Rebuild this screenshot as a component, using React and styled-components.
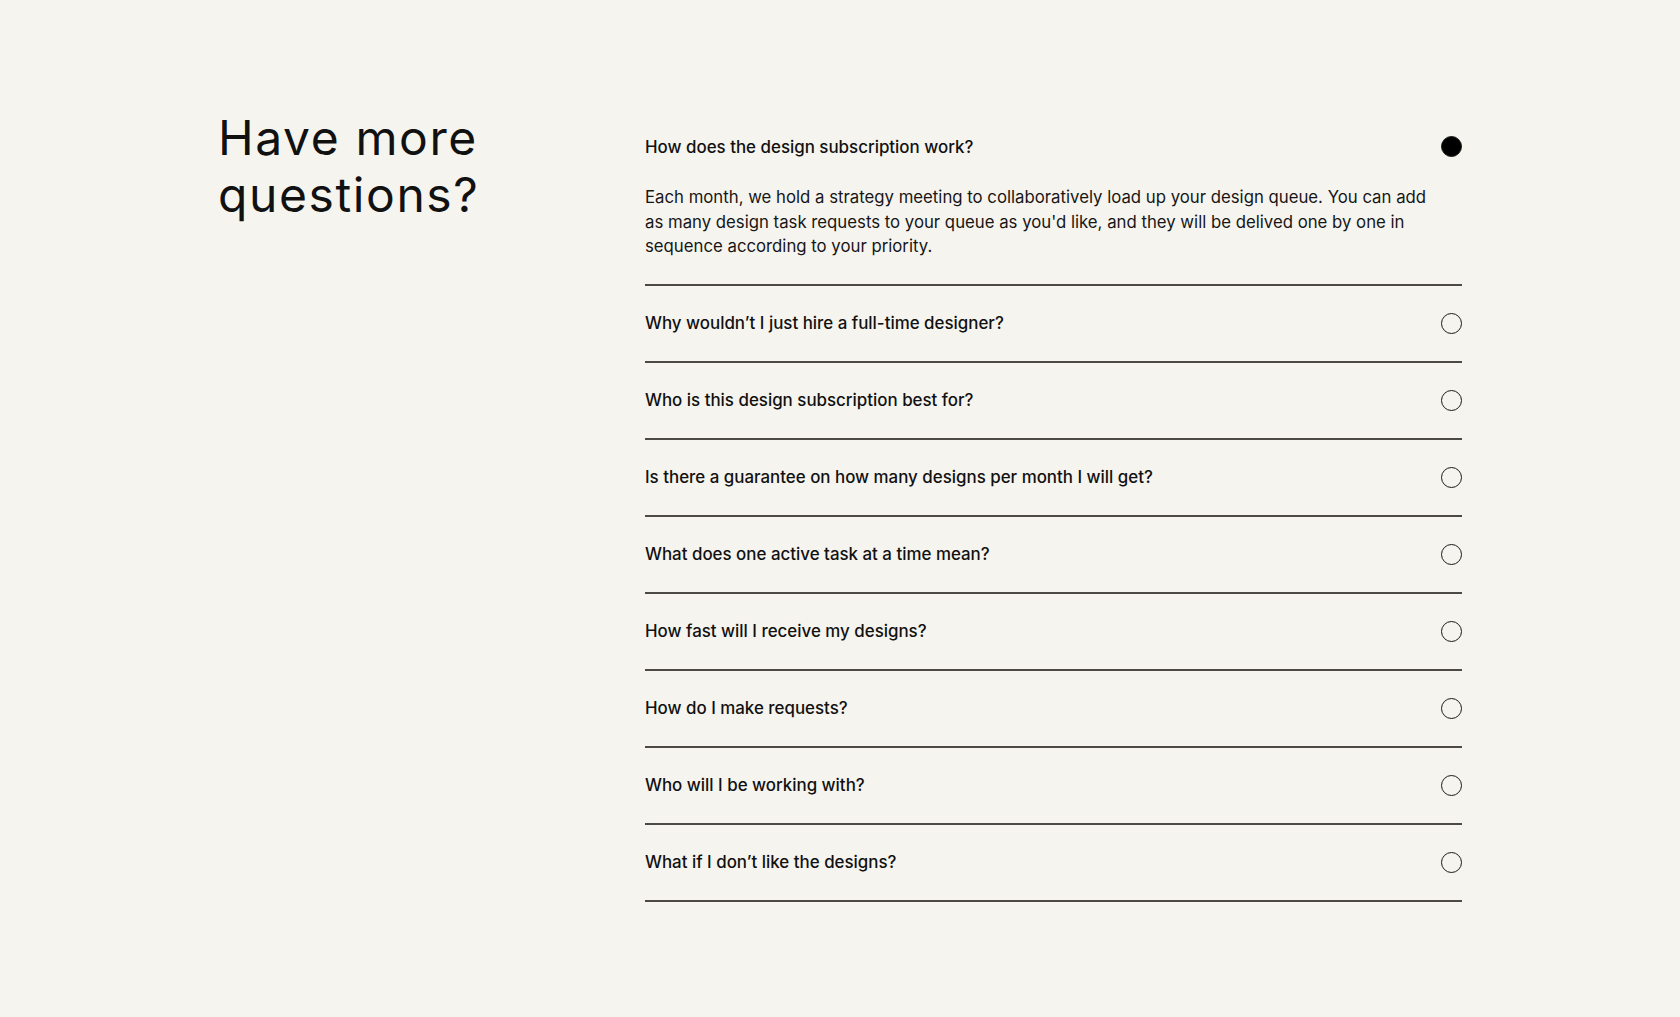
import React, { useState } from "react";
import styled, { createGlobalStyle } from "styled-components";

const GlobalStyle = createGlobalStyle`
  html, body {
    margin: 0;
    padding: 0;
    background: #f6f4ef;
  }
  body {
    font-family: Inter, "Noto Sans", sans-serif;
    color: #111;
  }
`;

const faqs = [
  {
    q: "How does the design subscription work?",
    a: "Each month, we hold a strategy meeting to collaboratively load up your design queue. You can add as many design task requests to your queue as you'd like, and they will be delived one by one in sequence according to your priority.",
  },
  { q: "Why wouldn’t I just hire a full-time designer?", a: "" },
  { q: "Who is this design subscription best for?", a: "" },
  { q: "Is there a guarantee on how many designs per month I will get?", a: "" },
  { q: "What does one active task at a time mean?", a: "" },
  { q: "How fast will I receive my designs?", a: "" },
  { q: "How do I make requests?", a: "" },
  { q: "Who will I be working with?", a: "" },
  { q: "What if I don’t like the designs?", a: "" },
];

const App = () => {
  const [open, setOpen] = useState(0);

  return (
    <Page>
      <GlobalStyle />
      <Section>
        <Heading>
          Have more
          <br />
          questions?
        </Heading>
        <List>
          {faqs.map((item, i) => (
            <Item key={item.q}>
              <Question onClick={() => setOpen(open === i ? -1 : i)}>
                <span>{item.q}</span>
                <Dot $filled={open === i} />
              </Question>
              {open === i && item.a && <Answer>{item.a}</Answer>}
            </Item>
          ))}
        </List>
      </Section>
    </Page>
  );
};

const Page = styled.div`
  min-height: 1017px;
  background: #f6f4ef;
`;

const Section = styled.section`
  width: 1244px;
  margin: 0 auto;
  padding-top: 109px;
  display: flex;
`;

const Heading = styled.h2`
  width: 427px;
  flex-shrink: 0;
  margin: 0;
  font-size: 48px;
  line-height: 57px;
  font-weight: 400;
  letter-spacing: 1.6px;
  color: #111;
`;

const List = styled.div`
  flex: 1;
  display: flex;
  flex-direction: column;
`;

const Item = styled.div`
  border-bottom: 2px solid #4d4943;
`;

const Question = styled.button`
  width: 100%;
  height: 75px;
  display: flex;
  align-items: center;
  justify-content: space-between;
  padding: 0;
  background: none;
  border: none;
  cursor: pointer;
  font-family: Inter, "Noto Sans", sans-serif;
  font-size: 16.9px;
  font-weight: 500;
  color: #111;
  text-align: left;
`;

const Dot = styled.span`
  width: 21px;
  height: 21px;
  box-sizing: border-box;
  border-radius: 50%;
  border: 1.5px solid #1a1a1a;
  background: ${(p) => (p.$filled ? "#000" : "transparent")};
  flex-shrink: 0;
`;

const Answer = styled.p`
  margin: 0;
  padding: 1px 26px 25px 0;
  font-size: 16.75px;
  line-height: 24.6px;
  font-weight: 400;
  color: #161616;
`;

export default App;
